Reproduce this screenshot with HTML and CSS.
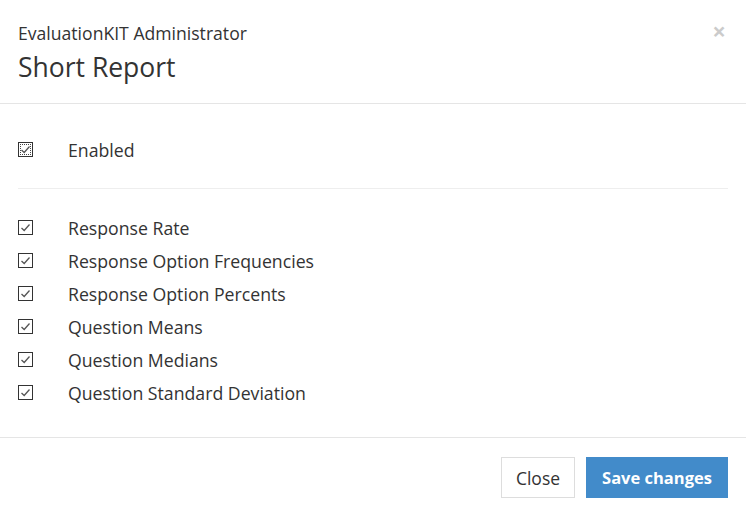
FILE: index.html
```html
<!DOCTYPE html>
<html lang="en">
<head>
  <meta charset="UTF-8" />
  <title>Short Report</title>
  <link rel="stylesheet" href="styles.css">
</head>
<body>
  <div class="modal">
    <div class="modal-header">
      <span class="close">&times;</span>
      <h4>EvaluationKIT Administrator</h4>
      <h3>Short Report</h3>
    </div>

    <div class="modal-body">
      <label class="row">
        <span class="box focus">
          <svg viewBox="0 0 15 15" width="15" height="15"><polyline points="3.5,8 6.2,10.5 11.5,4.5" /></svg>
        </span>
        Enabled
      </label>

      <hr>

      <div class="options">
        <label class="row"><span class="box"><svg viewBox="0 0 15 15" width="15" height="15"><polyline points="3.5,8 6.2,10.5 11.5,4.5" /></svg></span>Response Rate</label>
        <label class="row"><span class="box"><svg viewBox="0 0 15 15" width="15" height="15"><polyline points="3.5,8 6.2,10.5 11.5,4.5" /></svg></span>Response Option Frequencies</label>
        <label class="row"><span class="box"><svg viewBox="0 0 15 15" width="15" height="15"><polyline points="3.5,8 6.2,10.5 11.5,4.5" /></svg></span>Response Option Percents</label>
        <label class="row"><span class="box"><svg viewBox="0 0 15 15" width="15" height="15"><polyline points="3.5,8 6.2,10.5 11.5,4.5" /></svg></span>Question Means</label>
        <label class="row"><span class="box"><svg viewBox="0 0 15 15" width="15" height="15"><polyline points="3.5,8 6.2,10.5 11.5,4.5" /></svg></span>Question Medians</label>
        <label class="row"><span class="box"><svg viewBox="0 0 15 15" width="15" height="15"><polyline points="3.5,8 6.2,10.5 11.5,4.5" /></svg></span>Question Standard Deviation</label>
      </div>
    </div>

    <div class="modal-footer">
      <button class="btn btn-default">Close</button>
      <button class="btn btn-primary">Save changes</button>
    </div>
  </div>
</body>
</html>
```

FILE: styles.css
```css
body {
  margin: 0;
  font-family: "Open Sans", "Noto Sans", sans-serif;
  color: #333;
  background: #fff;
}

.modal {
  width: 746px;
}

.modal-header {
  position: relative;
  padding: 21px 18px 19px;
  border-bottom: 1px solid #e5e5e5;
}

.modal-header h4 {
  margin: 0;
  font-size: 17.6px;
  font-weight: 400;
  line-height: 24px;
}

.modal-header h3 {
  margin: 5px 0 0;
  font-size: 26.5px;
  font-weight: 400;
  line-height: 34px;
}

.close {
  position: absolute;
  top: 17px;
  right: 20px;
  font-size: 24px;
  line-height: 28px;
  font-weight: 700;
  color: #000;
  opacity: 0.2;
}

.modal-body {
  padding: 29px 18px 28px;
}

hr {
  margin: 22px 0 22px;
  border: 0;
  border-top: 1px solid #eee;
}

.row {
  display: flex;
  align-items: center;
  height: 33px;
  font-size: 17.7px;
}

.box {
  width: 15px;
  height: 15px;
  border: 1px solid #333;
  margin-right: 35px;
  box-sizing: border-box;
  position: relative;
  flex: none;
}

.box svg {
  position: absolute;
  left: -1px;
  top: -1px;
  fill: none;
  stroke: #555;
  stroke-width: 1.3;
}

.box.focus::after {
  content: "";
  position: absolute;
  inset: 1px;
  border: 1px dotted #444;
}

.modal-footer {
  display: flex;
  justify-content: flex-end;
  gap: 11px;
  padding: 19px 18px 18px;
  border-top: 1px solid #e5e5e5;
}

.btn {
  height: 41px;
  padding: 0;
  font-family: inherit;
  font-size: 17.5px;
  border-radius: 0;
  white-space: nowrap;
  cursor: pointer;
}

.btn-default {
  width: 74px;
  background: #fff;
  color: #333;
  border: 1px solid #ddd;
}

.btn-primary {
  width: 142px;
  background: #428bca;
  color: #fff;
  font-weight: 700;
  font-size: 16.5px;
  border: 1px solid #428bca;
}
```
